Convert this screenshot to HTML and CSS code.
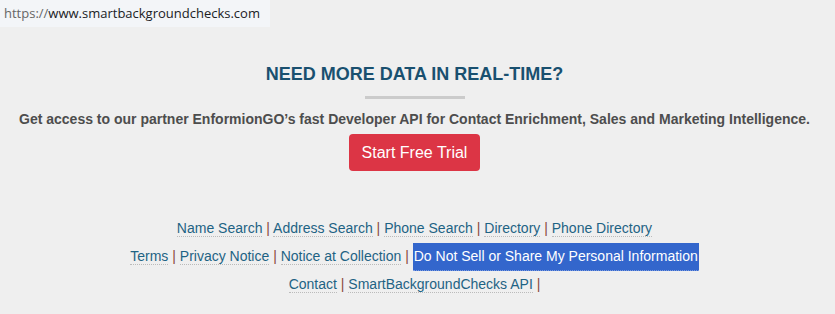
FILE: index.html
```html
<!DOCTYPE html>
<html lang="en">
  <head>
    <meta charset="UTF-8" />
    <title>SmartBackgroundChecks</title>
    <link rel="stylesheet" href="styles.css">
  </head>
  <body>
    <div class="status-url"><span class="proto">https://</span>www.smartbackgroundchecks.com</div>

    <section class="promo">
      <h3>NEED MORE DATA IN REAL-TIME?</h3>
      <div class="rule"></div>
      <p>Get access to our partner EnformionGO’s fast Developer API for Contact Enrichment, Sales and Marketing Intelligence.</p>
      <a class="trial-btn" href="#">Start Free Trial</a>
    </section>

    <footer class="links">
      <div class="row">
        <a href="#">Name Search</a> | <a href="#">Address Search</a> | <a href="#">Phone Search</a> | <a href="#">Directory</a> | <a href="#">Phone Directory</a>
      </div>
      <div class="row">
        <a href="#">Terms</a> | <a href="#">Privacy Notice</a> | <a href="#">Notice at Collection</a> | <a href="#" class="selected">Do Not Sell or Share My Personal Information</a>
      </div>
      <div class="row">
        <a href="#">Contact</a> | <a href="#">SmartBackgroundChecks API</a> |
      </div>
    </footer>
  </body>
</html>
```

FILE: styles.css
```css
body {
  margin: 0;
  background: #efefef;
  font-family: "Liberation Sans", Arial, sans-serif;
  color: #555;
}

.status-url {
  display: inline-block;
  background: #f3f5f8;
  color: #202124;
  font-family: "Open Sans", "Noto Sans", sans-serif;
  font-size: 13px;
  line-height: 27px;
  padding: 0 6px 0 4px;
  width: 260px;
}
.status-url .proto {
  color: #666;
}

.promo {
  text-align: center;
  padding: 35px 6px 0 0;
}
.promo h3 {
  margin: 0;
  font-size: 18px;
  font-weight: bold;
  color: #19506f;
  line-height: 24px;
}
.rule {
  width: 100px;
  height: 3px;
  background: #cbcbcb;
  margin: 10px auto 0;
}
.promo p {
  margin: 10px 0 0;
  font-size: 14px;
  font-weight: bold;
  color: #4d4d4d;
  line-height: 20px;
}
.trial-btn {
  display: inline-block;
  margin-top: 5px;
  background: #dc3545;
  color: #fff;
  font-size: 16px;
  line-height: 37px;
  padding: 0 13px;
  border-radius: 4px;
  text-decoration: none;
}

.links {
  text-align: center;
  margin-top: 43px;
  padding-right: 6px;
  font-size: 14px;
  color: #8a4a3c;
}
.links .row {
  line-height: 28px;
}
.links a {
  color: #1e6384;
  text-decoration: none;
  border-bottom: 1px dotted #bbb;
}
.links a.selected {
  background: #3366cc;
  color: #fff;
  padding: 5px 1px 6px;
  border-bottom-color: #7b9be0;
}
```
